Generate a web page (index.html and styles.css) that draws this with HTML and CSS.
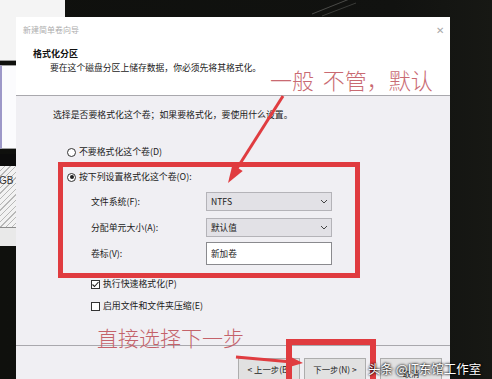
FILE: index.html
```html
<!DOCTYPE html>
<html lang="zh-CN">
<head>
    <meta charset="UTF-8">
    <title>新建简单卷向导 - 格式化分区</title>
    <link rel="stylesheet" href="styles.css">
</head>
<body>

    <div class="desktop">

        <!-- Fenster im Hintergrund (Datenträgerverwaltung) -->
        <div class="backwin">
            <div class="bw-top"></div>
            <div class="bw-list"></div>
            <div class="bw-black"></div>
            <div class="bw-disk">GB</div>
            <div class="bw-bottom"></div>
        </div>

        <div class="dialog">
            <div class="titlebar">
                <span>新建简单卷向导</span>
                <span class="close">✕</span>
            </div>
            <div class="header">
                <h1>格式化分区</h1>
                <p>要在这个磁盘分区上储存数据，你必须先将其格式化。</p>
            </div>
            <div class="content">
                <p class="intro">选择是否要格式化这个卷；如果要格式化，要使用什么设置。</p>
                <div class="radio"><span class="circle"></span>不要格式化这个卷(D)</div>
                <div class="radio"><span class="circle checked"></span>按下列设置格式化这个卷(O):</div>
                <div class="form">
                    <span>文件系统(F):</span>
                    <div class="select">NTFS
                        <svg width="8" height="5" viewBox="0 0 8 5"><path d="M1 1l3 3 3-3" fill="none" stroke="#444" stroke-width="1"/></svg>
                    </div>
                    <span>分配单元大小(A):</span>
                    <div class="select">默认值
                        <svg width="8" height="5" viewBox="0 0 8 5"><path d="M1 1l3 3 3-3" fill="none" stroke="#444" stroke-width="1"/></svg>
                    </div>
                    <span>卷标(V):</span>
                    <div class="input">新加卷</div>
                </div>
                <div class="check">
                    <span class="box"><svg width="9" height="9" viewBox="0 0 9 9"><path d="M1.5 4.5l2 2 4-4.5" fill="none" stroke="#222" stroke-width="1.1"/></svg></span>执行快速格式化(P)
                </div>
                <div class="check"><span class="box"></span>启用文件和文件夹压缩(E)</div>
            </div>
            <div class="footer">
                <div class="btn">&lt; 上一步(B)</div>
                <div class="btn">下一步(N) &gt;</div>
                <div class="btn cancel">取消</div>
            </div>
        </div>

        <!-- Anmerkungen -->
        <div class="note note-top">一般 不管，默认</div>
        <div class="note note-bottom">直接选择下一步</div>
        <div class="frame frame-form"></div>
        <div class="frame frame-next"></div>

        <svg class="arrows" width="492" height="379" viewBox="0 0 492 379">
            <line x1="312" y1="14" x2="352" y2="-2" stroke="#4a4b48" stroke-width="1"/>
            <line x1="322" y1="16" x2="356" y2="3" stroke="#3a3b38" stroke-width="1"/>
            <line x1="283" y1="96" x2="236" y2="170" stroke="#e03c40" stroke-width="3"/>
            <polygon points="228,183 242.7,171 232.5,164.6" fill="#e03c40"/>
            <line x1="236" y1="357" x2="292" y2="362" stroke="#e03c40" stroke-width="3"/>
            <polygon points="303,363 289.6,367 290.4,356.8" fill="#e03c40"/>
        </svg>

        <div class="watermark">头条 @IT东馆工作室</div>
    </div>

</body>
</html>
```

FILE: styles.css
```css
body {
    margin: 0;
    padding: 0;
    font-family: "Noto Sans CJK SC", "Noto Sans", sans-serif;
    background-color: #121310;
    overflow: hidden;
}

.desktop {
    position: relative;
    width: 492px;
    height: 379px;
    overflow: hidden;
    background: linear-gradient(90deg, #0f100d 0%, #111210 80%, #171814 100%);
}

/* Fenster im Hintergrund */
.backwin {
    position: absolute;
    left: 0;
    top: 0;
    width: 65px;
    height: 379px;
    display: flex;
    flex-direction: column;
}

.bw-top {
    height: 60px;
    background-color: #f4f4f4;
    border-bottom: 1px solid #9a9a9a;
}

.bw-list {
    height: 82px;
    margin: 4px 0 0 0;
    width: 14px;
    border: 1px solid #a0a0a0;
    border-left: 2px solid #9d98c8;
    background-color: #fbfbfd;
}

.bw-black {
    margin-top: 5px;
    height: 12px;
    background-color: #0c0c0c;
}

.bw-disk {
    height: 62px;
    background: repeating-linear-gradient(135deg, #f2f2f2 0 3px, #b8b8b8 3px 4px);
    border-bottom: 1px solid #8c8c8c;
    font-family: "Liberation Sans", sans-serif;
    font-size: 10px;
    color: #333;
    padding-top: 9px;
    box-sizing: border-box;
    text-indent: -1px;
}

.bw-bottom {
    height: 18px;
    background-color: #e9e9e9;
}

/* Dialog */
.dialog {
    position: absolute;
    left: 16px;
    top: 17px;
    width: 434px;
    height: 380px;
    background-color: #f0eff3;
    display: flex;
    flex-direction: column;
}

.titlebar {
    height: 24px;
    background-color: #fff;
    display: flex;
    justify-content: space-between;
    align-items: center;
    padding: 0 6px 0 7px;
    font-size: 8px;
    color: #adadad;
}

.titlebar .close {
    font-size: 10px;
    color: #a8a8a8;
}

.header {
    height: 55px;
    background-color: #fff;
    border-bottom: 1px solid #a9a8ad;
    padding: 6px 0 0 17px;
    box-sizing: border-box;
}

.header h1 {
    margin: 0;
    font-size: 9px;
    font-weight: bold;
    line-height: 14px;
    color: #111;
}

.header p {
    margin: 0 0 0 17px;
    font-size: 8.8px;
    line-height: 14px;
    color: #222;
}

.content {
    height: 249px;
    padding: 12px 0 0 37px;
    box-sizing: border-box;
    font-size: 8.9px;
    color: #1a1a1a;
}

.intro {
    margin: 0;
    line-height: 14px;
}

.radio {
    display: flex;
    align-items: center;
    margin-left: 14px;
    line-height: 14px;
    margin-top: 11px;
}

.radio:first-of-type {
    margin-top: 23px;
}

.circle {
    width: 7px;
    height: 7px;
    border: 1px solid #333;
    border-radius: 50%;
    background-color: #fff;
    margin-right: 3px;
    position: relative;
}

.circle.checked::after {
    content: "";
    position: absolute;
    left: 1.5px;
    top: 1.5px;
    width: 4px;
    height: 4px;
    border-radius: 50%;
    background-color: #222;
}

.form {
    display: grid;
    grid-template-columns: 115px 126px;
    grid-auto-rows: 26px;
    align-items: center;
    margin: 4px 0 0 38px;
}

.select {
    height: 19px;
    box-sizing: border-box;
    border: 1px solid #b4b3b8;
    background-color: #e2e1e6;
    display: flex;
    justify-content: space-between;
    align-items: center;
    padding: 0 3px 0 4px;
    font-size: 8.6px;
}

.input {
    height: 23px;
    box-sizing: border-box;
    border: 1px solid #8a8a8e;
    background-color: #fff;
    display: flex;
    align-items: center;
    padding-left: 4px;
    font-size: 8.6px;
}

.check {
    display: flex;
    align-items: center;
    margin-left: 38px;
    line-height: 14px;
    margin-top: 8px;
}

.form + .check {
    margin-top: 11px;
}

.check .box {
    width: 9px;
    height: 9px;
    box-sizing: border-box;
    border: 1px solid #333;
    background-color: #fff;
    margin-right: 3px;
    display: flex;
    align-items: center;
    justify-content: center;
}

.check .box svg {
    flex: none;
}

.footer {
    border-top: 1px solid #a9a8ad;
    padding: 12px 0 0 222px;
    display: flex;
    gap: 4px;
}

.btn {
    width: 62px;
    height: 22px;
    box-sizing: border-box;
    border: 1px solid #adadad;
    background-color: #e1e1e1;
    font-size: 8.4px;
    color: #222;
    display: flex;
    justify-content: center;
    align-items: center;
}

.btn.cancel {
    margin-left: 10px;
    padding-top: 8px;
}

/* Anmerkungen */
.note {
    position: absolute;
    font-family: "Noto Sans CJK SC", sans-serif;
    font-weight: 300;
    line-height: 1;
    white-space: nowrap;
}

.note-top {
    left: 270px;
    top: 68px;
    font-size: 22px;
    word-spacing: 4px;
    color: #c96a72;
}

.note-bottom {
    left: 97px;
    top: 327px;
    font-size: 21px;
    color: #c4626a;
}

.frame {
    position: absolute;
    border: 5px solid #e03b3f;
    box-sizing: border-box;
}

.frame-form {
    left: 58px;
    top: 162px;
    width: 302px;
    height: 116px;
}

.frame-next {
    left: 286px;
    top: 339px;
    width: 90px;
    height: 60px;
    border-width: 6px;
}

.arrows {
    position: absolute;
    left: 0;
    top: 0;
}

.watermark {
    position: absolute;
    left: 368px;
    top: 361px;
    font-size: 12.5px;
    line-height: 16px;
    color: #fff;
    text-shadow: 0 0 2px #000, 0 0 3px #000;
    white-space: nowrap;
}
```
